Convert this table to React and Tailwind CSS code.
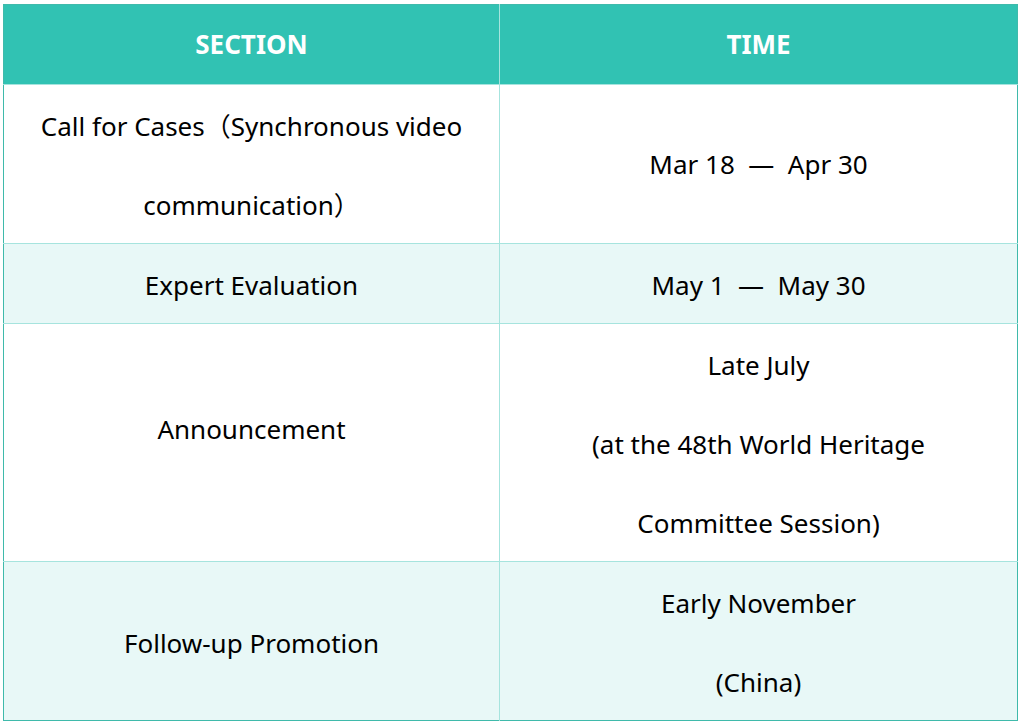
import React from "react";

const rows = [
  {
    section: ["Call for Cases（Synchronous video", "communication）"],
    time: ["Mar 18\u00a0 —\u00a0 Apr 30"],
    timeClass: "pb-[4px]",
  },
  { section: ["Expert Evaluation"], time: ["May 1\u00a0 —\u00a0 May 30"], shaded: true },
  {
    section: ["Announcement"],
    sectionClass: "pb-[30px]",
    time: ["Late July", "(at the 48th World Heritage", "Committee Session)"],
  },
  {
    section: ["Follow-up Promotion"],
    time: ["Early November", "(China)"],
    shaded: true,
  },
];

const App = () => {
  return (
    <div
      className="w-[1021px] h-[726px] bg-white pt-[4px] pl-[3px]"
      style={{ fontFamily: '"Noto Sans", "Noto Sans CJK SC", sans-serif' }}
    >
      <table className="w-[1015px] border-collapse border border-[#3fbaab] text-[26px] text-black">
        <thead>
          <tr className="bg-[#31c2b3] text-white h-[80px]">
            <th className="w-[496px] border-r border-[#a6e4de] font-bold text-[26px]">SECTION</th>
            <th className="font-bold text-[26px]">TIME</th>
          </tr>
        </thead>
        <tbody>
          {rows.map((row, i) => (
            <tr
              key={i}
              className={`${row.shaded ? "bg-[#e8f8f7]" : "bg-white"} border-t border-[#a6e4de]`}
            >
              <td className={`border-r border-[#a6e4de] text-center leading-[79px] p-0 ${row.sectionClass || ""}`}>
                {row.section.map((line, j) => (
                  <div key={j} className="whitespace-nowrap pt-[2px] -mb-[2px]">{line}</div>
                ))}
              </td>
              <td className={`text-center leading-[79px] p-0 ${row.timeClass || ""}`}>
                {row.time.map((line, j) => (
                  <div key={j} className="whitespace-nowrap pt-[2px] -mb-[2px]">{line}</div>
                ))}
              </td>
            </tr>
          ))}
        </tbody>
      </table>
    </div>
  );
};

export default App;
